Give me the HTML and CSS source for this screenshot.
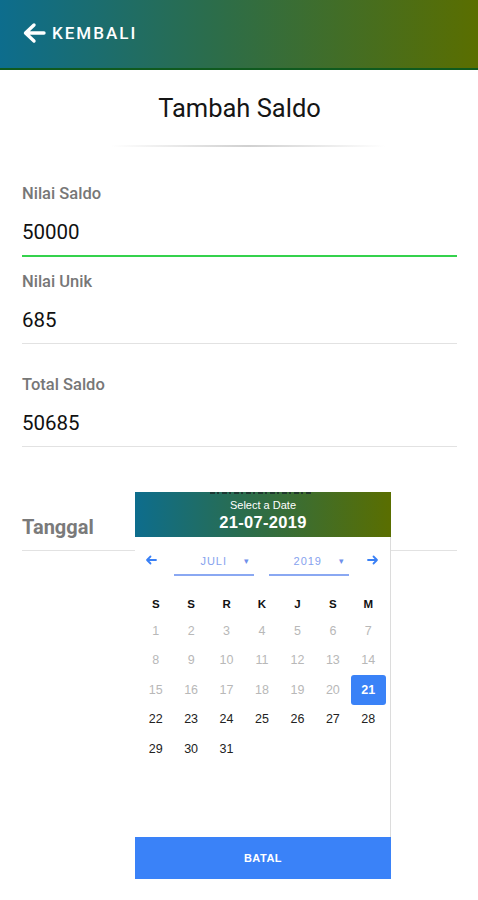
FILE: index.html
```html
<!DOCTYPE html>
<html>
<head>
    <title>Tambah Saldo</title>
    <meta charset="utf-8">
    <link rel="stylesheet" href="styles.css">
</head>
<body>
<div class="topbar">
    <a class="back" href="#">
        <svg class="back-icon" width="24" height="22" viewBox="0 0 24 22">
            <path d="M22 11H4 M12 3L3.5 11L12 19" fill="none" stroke="#fff" stroke-width="3.4" stroke-linecap="round" stroke-linejoin="round"/>
        </svg>
        <span>KEMBALI</span>
    </a>
</div>

<div class="content">
    <h1 class="title">Tambah Saldo</h1>
    <div class="divider"></div>

    <div class="field active">
        <div class="label">Nilai Saldo</div>
        <div class="value">50000</div>
    </div>
    <div class="field">
        <div class="label">Nilai Unik</div>
        <div class="value">685</div>
    </div>
    <div class="field spaced">
        <div class="label">Total Saldo</div>
        <div class="value">50685</div>
    </div>
    <div class="field date">
        <div class="label big">Tanggal</div>
    </div>
</div>

<div class="picker">
    <div class="picker-head">
        <div class="picker-sub">Select a Date</div>
        <div class="picker-date">21-07-2019</div>
    </div>
    <div class="picker-body">
        <div class="month-row">
            <svg class="nav" width="12" height="10" viewBox="0 0 12 10">
                <path d="M11 5H2 M5.5 1.5L2 5l3.5 3.5" fill="none" stroke="#3a80f5" stroke-width="1.8" stroke-linecap="round" stroke-linejoin="round"/>
            </svg>
            <div class="dropdown"><span>JULI</span><span class="caret">&#9662;</span></div>
            <div class="dropdown"><span>2019</span><span class="caret">&#9662;</span></div>
            <svg class="nav" width="12" height="10" viewBox="0 0 12 10">
                <path d="M1 5h9 M6.5 1.5L10 5L6.5 8.5" fill="none" stroke="#3a80f5" stroke-width="1.8" stroke-linecap="round" stroke-linejoin="round"/>
            </svg>
        </div>
        <div class="weekdays">
            <span>S</span><span>S</span><span>R</span><span>K</span><span>J</span><span>S</span><span>M</span>
        </div>
        <div class="days">
            <span class="off">1</span><span class="off">2</span><span class="off">3</span><span class="off">4</span><span class="off">5</span><span class="off">6</span><span class="off">7</span>
            <span class="off">8</span><span class="off">9</span><span class="off">10</span><span class="off">11</span><span class="off">12</span><span class="off">13</span><span class="off">14</span>
            <span class="off">15</span><span class="off">16</span><span class="off">17</span><span class="off">18</span><span class="off">19</span><span class="off">20</span><span class="selected">21</span>
            <span>22</span><span>23</span><span>24</span><span>25</span><span>26</span><span>27</span><span>28</span>
            <span>29</span><span>30</span><span>31</span>
        </div>
    </div>
    <div class="picker-btn">BATAL</div>
</div>
</body>
</html>
```

FILE: styles.css
```css
html,body{
    padding: 0;
    margin: 0;
    font-family: Roboto, "Noto Sans", sans-serif;
    background: #fff;
}

.topbar{
    height: 68px;
    background: linear-gradient(to right, #0d6d8d, #2c6d4a 45%, #5a6e00);
    border-bottom: 2px solid #0f5a1e;
    display: flex;
    align-items: center;
    padding-left: 22px;
}

.back{
    display: flex;
    align-items: center;
    color: #fff;
    text-decoration: none;
    font-size: 17px;
    font-weight: 500;
    letter-spacing: 2px;
    margin-top: -2px;
}

.back-icon{
    margin-right: 6px;
}

.content{
    padding: 0 21px 0 22px;
}

.title{
    margin: 22px 0 0;
    font-size: 25.5px;
    font-weight: 400;
    line-height: 32px;
    text-align: center;
    color: #151515;
}

.divider{
    height: 2px;
    margin: 21px 72px 0 89px;
    background: linear-gradient(to right, rgba(200,200,200,0), #d0d0d0 50%, rgba(200,200,200,0));
}

.field{
    margin-top: 15px;
    padding-bottom: 11px;
    border-bottom: 1px solid #e2e2e2;
}

.field.active{
    margin-top: 37px;
    border-bottom: 2px solid #34d24c;
}

.field.spaced{
    margin-top: 31px;
}

.field.date{
    margin-top: 68px;
}

.label{
    font-size: 16.5px;
    font-weight: 500;
    line-height: 20px;
    color: #777;
}

.label.big{
    font-size: 20px;
    font-weight: 700;
    line-height: 24px;
    color: #7a7a7a;
}

.value{
    margin-top: 16px;
    font-size: 20.5px;
    line-height: 24px;
    color: #111;
}

/* date picker dialog */
.picker{
    position: absolute;
    left: 135px;
    top: 492px;
    width: 256px;
    height: 387px;
    display: flex;
    flex-direction: column;
    background: #fff;
    font-family: "Liberation Sans", Arial, sans-serif;
}

.picker-head{
    position: relative;
    height: 45px;
    background: linear-gradient(to right, #0d6d8d, #2c6d4a 45%, #5a6e00);
    color: #fff;
    text-align: center;
}

/* bottom of the clipped dialog title */
.picker-head:before{
    content: "";
    position: absolute;
    left: 75px;
    top: 0;
    width: 102px;
    height: 2px;
    background: repeating-linear-gradient(to right, #1b2b2a 0 5px, transparent 5px 7px, #1b2b2a 7px 9px, transparent 9px 12px);
    opacity: 0.8;
}

.picker-sub{
    padding-top: 7px;
    font-size: 11px;
    line-height: 12px;
}

.picker-date{
    margin-top: 1px;
    font-size: 16.5px;
    font-weight: 700;
    line-height: 20px;
    letter-spacing: 0.3px;
}

.picker-body{
    flex: 1;
    border-right: 1px solid #dcdcdc;
}

.month-row{
    height: 46px;
    display: flex;
    align-items: center;
    padding: 0 10px 0 9px;
}

.nav{
    margin: 0 1px;
}

.dropdown{
    width: 80px;
    height: 30px;
    margin-left: 16px;
    box-sizing: border-box;
    display: flex;
    align-items: center;
    justify-content: flex-end;
    padding-top: 2px;
    border-bottom: 2px solid #8aa8f2;
    font-size: 11px;
    letter-spacing: 1px;
    color: #86a2ee;
    margin-top: 2px;
}

.dropdown + .dropdown{
    margin-left: 15px;
    margin-right: 17px;
}

.dropdown .caret{
    font-size: 9px;
    margin: 0 4px 0 17px;
    color: #6f90ea;
}

.weekdays,
.days{
    display: grid;
    grid-template-columns: repeat(7, 1fr);
    padding: 0 4px 0 3px;
    text-align: center;
}

.weekdays{
    margin-top: 9px;
    line-height: 24px;
    font-size: 11.5px;
    font-weight: 700;
    color: #111;
}

.days{
    grid-auto-rows: 29.5px;
    font-size: 12.5px;
    color: #222;
}

.days span{
    display: flex;
    align-items: center;
    justify-content: center;
}

.days .off{
    color: #b8b8b8;
}

.days .selected{
    background: #3a82f7;
    border-radius: 3px;
    color: #fff;
    font-weight: 700;
}

.picker-btn{
    height: 42px;
    background: #3a82f8;
    color: #fff;
    font-size: 11px;
    font-weight: 700;
    letter-spacing: 0.5px;
    line-height: 42px;
    text-align: center;
}
```
